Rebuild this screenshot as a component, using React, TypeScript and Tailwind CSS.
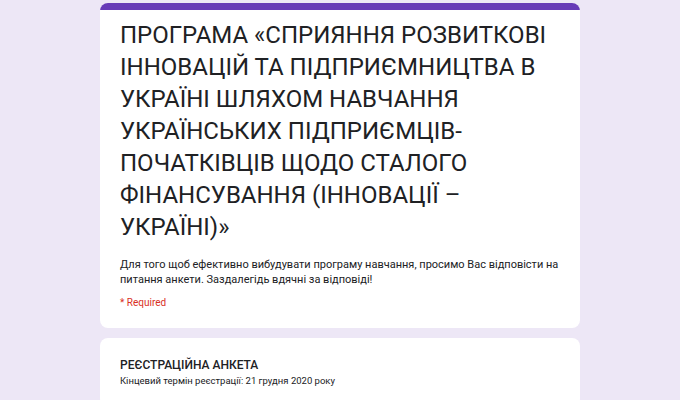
export default function App() {
  return (
    <div
      className="min-h-screen w-full bg-[#ede7f6] pt-[3px]"
      style={{ fontFamily: '"Roboto", "Liberation Sans", sans-serif' }}
    >
      <div className="mx-auto flex w-[480px] flex-col gap-[10px]">
        {/* Header card */}
        <div className="overflow-hidden rounded-lg bg-white">
          <div className="h-[7px] bg-[#673ab7]"></div>
          <div className="px-5 pt-[9px] pb-[18px]">
            <h1 className="text-[24px] leading-[32px] font-normal text-[#202124]">
              ПРОГРАМА «СПРИЯННЯ РОЗВИТКОВІ ІННОВАЦІЙ ТА ПІДПРИЄМНИЦТВА В
              УКРАЇНІ ШЛЯХОМ НАВЧАННЯ УКРАЇНСЬКИХ ПІДПРИЄМЦІВ-ПОЧАТКІВЦІВ ЩОДО
              СТАЛОГО ФІНАНСУВАННЯ (ІННОВАЦІЇ – УКРАЇНІ)»
            </h1>
            <p className="mt-[14px] text-[11px] leading-[15px] text-[#202124]">
              Для того щоб ефективно вибудувати програму навчання, просимо Вас
              відповісти на питання анкети. Заздалегідь вдячні за відповіді!
            </p>
            <p className="mt-[8px] text-[10px] leading-[15px] text-[#d93025]">
              * Required
            </p>
          </div>
        </div>

        {/* Section card */}
        <div className="rounded-lg bg-white px-5 pt-[20px] pb-5">
          <h2 className="text-[12px] leading-[15px] font-medium text-[#202124]">
            РЕЄСТРАЦІЙНА АНКЕТА
          </h2>
          <p className="mt-px text-[9.5px] leading-[13px] text-[#202124]">
            Кінцевий термін реєстрації: 21 грудня 2020 року
          </p>
        </div>
      </div>
    </div>
  );
}
